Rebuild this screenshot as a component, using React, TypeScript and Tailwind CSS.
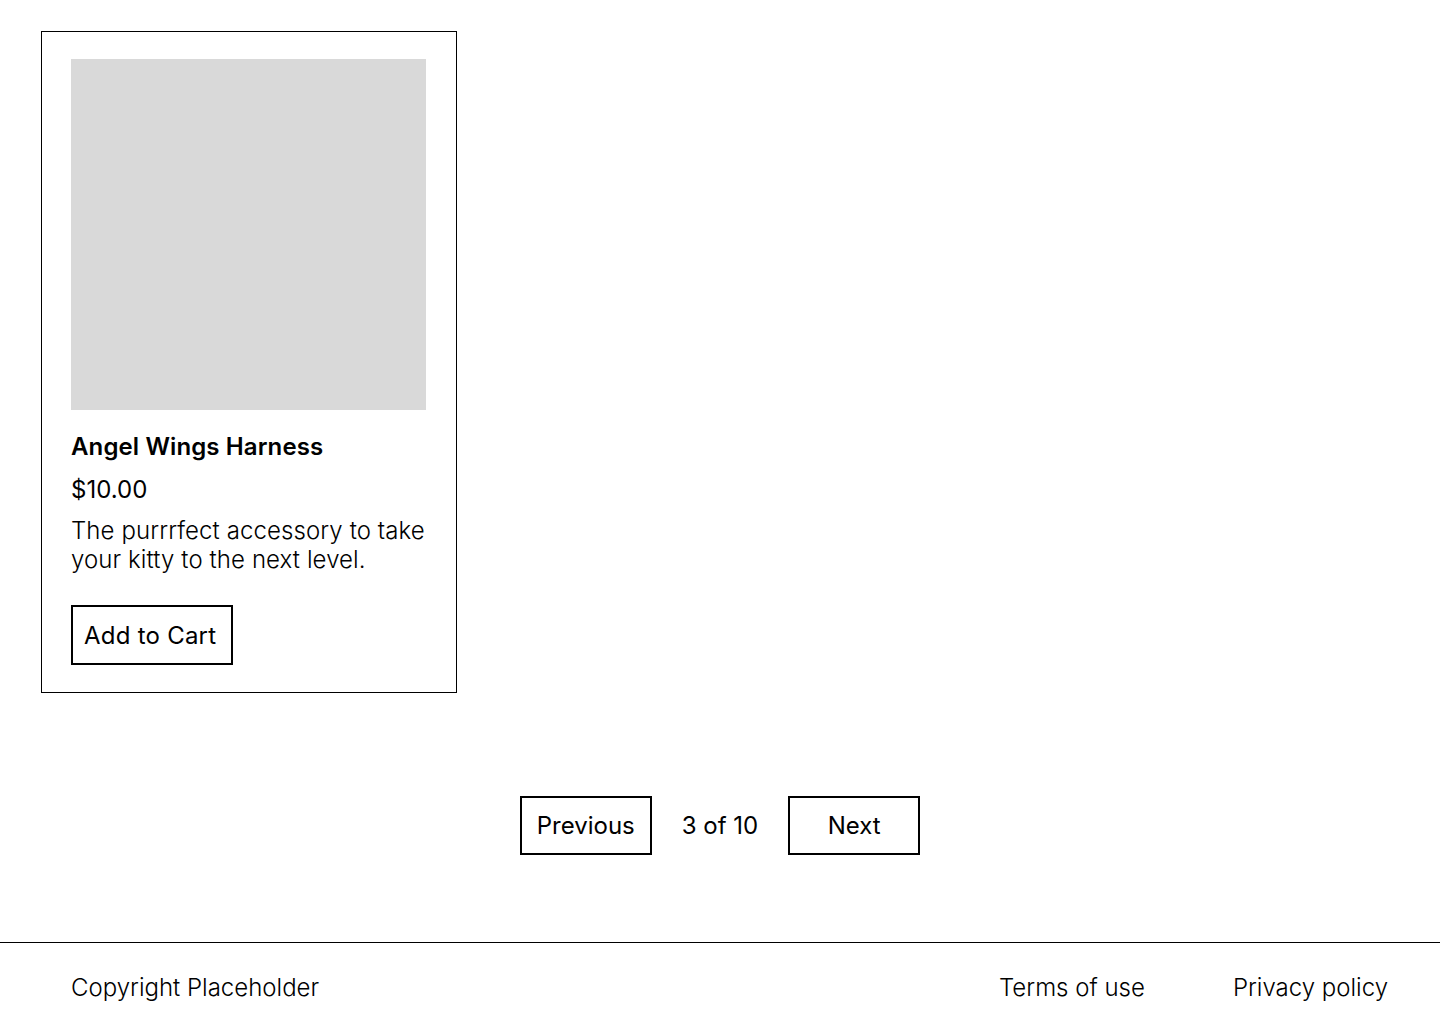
const product = {
  name: "Angel Wings Harness",
  price: "$10.00",
  description: "The purrrfect accessory to take your kitty to the next level.",
};

function ProductCard() {
  return (
    <div className="flex w-[416px] flex-col border border-black px-[29px] pt-[27px] pb-[27px]">
      <div className="h-[351px] w-[355px] bg-[#d9d9d9]" />
      <h2 className="mt-[22px] text-[24px] leading-[29px] font-semibold tracking-[0.005em]">
        {product.name}
      </h2>
      <p className="mt-[14px] text-[24px] leading-[29px]">{product.price}</p>
      <p className="mt-[12px] text-[24px] leading-[29px] font-light tracking-[0.004em]">
        {product.description}
      </p>
      <div className="mt-[31px]">
        <button className="w-[162px] border-2 border-black px-[11px] py-[13.5px] text-left text-[24px] leading-[29px] tracking-[0.01em]">
          Add to Cart
        </button>
      </div>
    </div>
  );
}

function Pagination() {
  return (
    <div className="flex items-center justify-center gap-[30px]">
      <button className="h-[59px] w-[132px] border-2 border-black text-[24px] leading-[29px]">
        Previous
      </button>
      <span className="text-[24px] leading-[29px]">3 of 10</span>
      <button className="h-[59px] w-[132px] border-2 border-black text-[24px] leading-[29px]">
        Next
      </button>
    </div>
  );
}

export default function App() {
  return (
    <div
      className="min-h-screen bg-white text-black"
      style={{ fontFamily: "Inter, 'Noto Sans', sans-serif" }}
    >
      <main className="px-[41px] pt-[31px]">
        <ProductCard />
        <div className="mt-[103px] mb-[87px]">
          <Pagination />
        </div>
      </main>
      <footer className="flex items-center justify-between border-t border-black pt-[30px] pb-[30px] pl-[71px] pr-[52px] text-[24px] leading-[29px] font-light">
        <span>Copyright Placeholder</span>
        <nav className="flex gap-[88px]">
          <a href="#">Terms of use</a>
          <a href="#">Privacy policy</a>
        </nav>
      </footer>
    </div>
  );
}
